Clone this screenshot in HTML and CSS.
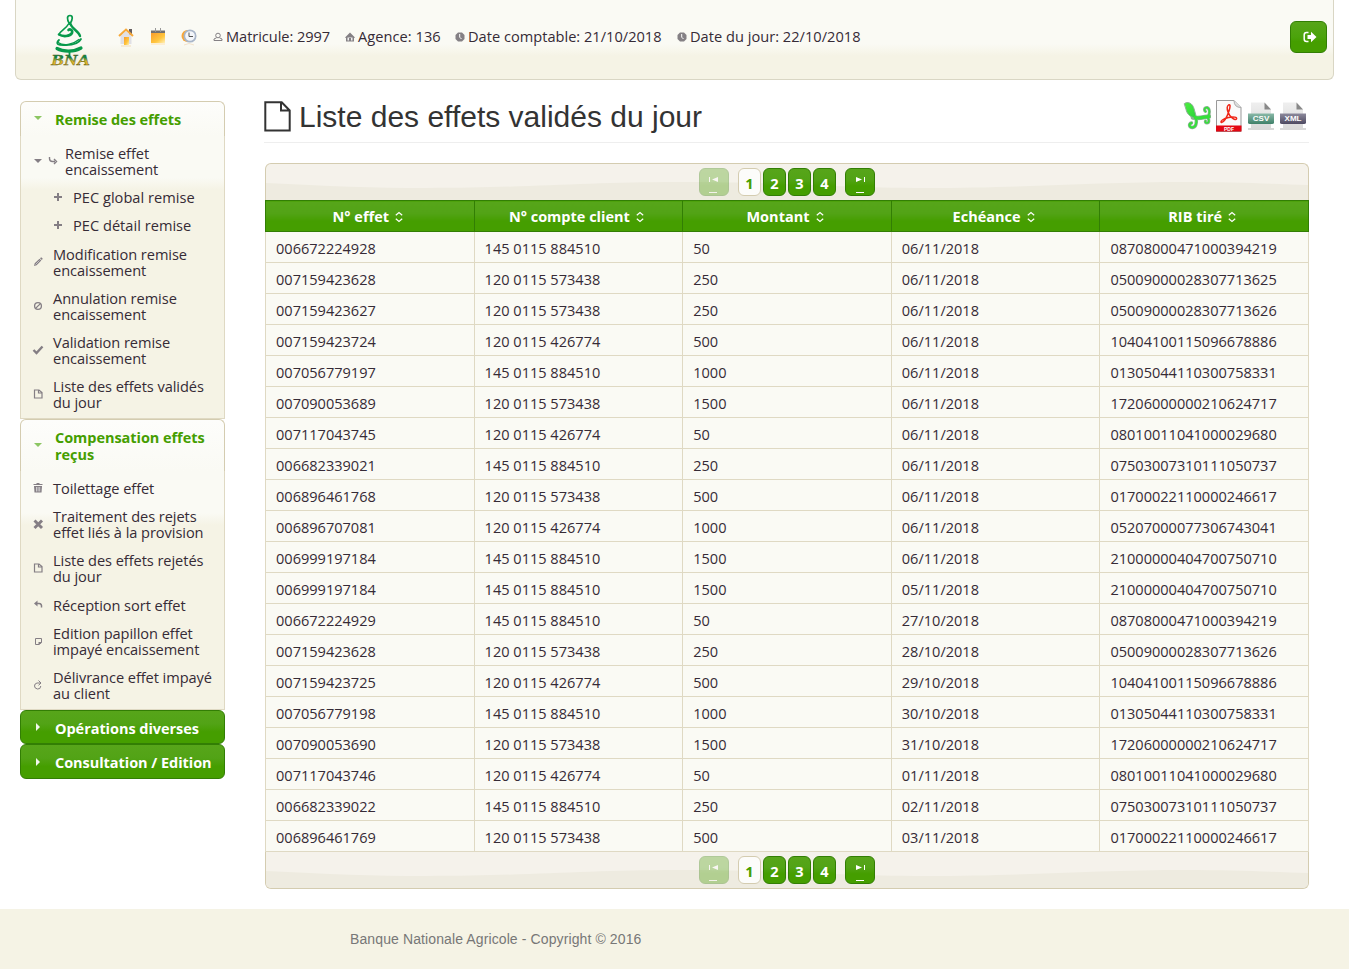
FILE: index.html
```html
<!DOCTYPE html>
<html lang="fr">
<head>
<meta charset="utf-8">
<title>Liste des effets validés du jour</title>
<link rel="stylesheet" href="styles.css">
</head>
<body>
<svg class="defs" width="0" height="0">
  <defs>
    <linearGradient id="orange" x1="0" y1="0" x2="1" y2="1"><stop offset="0" stop-color="#f79b2c"/><stop offset=".6" stop-color="#ffc53d"/><stop offset="1" stop-color="#fff0b8"/></linearGradient>
    <linearGradient id="gold" x1="0" y1="0" x2="0" y2="1"><stop offset=".3" stop-color="#0b8a43"/><stop offset=".55" stop-color="#d9b52c"/><stop offset="1" stop-color="#f2b01c"/></linearGradient>
    <linearGradient id="leaf" x1="0" y1="0" x2="1" y2="1"><stop offset="0" stop-color="#4df03f"/><stop offset="1" stop-color="#2ad13c"/></linearGradient>
    <linearGradient id="teal" x1="0" y1="0" x2="0" y2="1"><stop offset="0" stop-color="#8ab9a8"/><stop offset="1" stop-color="#3f8069"/></linearGradient>
    <linearGradient id="slate" x1="0" y1="0" x2="0" y2="1"><stop offset="0" stop-color="#8d8a9c"/><stop offset="1" stop-color="#4d4961"/></linearGradient>
    <linearGradient id="sheet" x1="0" y1="0" x2="0" y2="1"><stop offset="0" stop-color="#efefef"/><stop offset="1" stop-color="#d9d9d9"/></linearGradient>
  </defs>
  <symbol id="i-page" viewBox="0 0 16 16"><path d="M4.500 4h4.500l3 2.500V12H4.500zM8.500 4v3H12" fill="none" stroke="currentColor" stroke-width="1.200"/></symbol>
  <symbol id="i-sort" viewBox="0 0 10 12"><path d="M1.800 4.300 5 1.500l3.200 2.800M1.800 7.700 5 10.500l3.200-2.800" fill="none" stroke="currentColor" stroke-width="1.200"/></symbol>
  <symbol id="i-clock" viewBox="0 0 10 10"><path d="M3 .500h4L9.500 3v4L7 9.500H3L.500 7V3z" fill="#848084"/><path d="M4.700 2v3.200L6.500 7" fill="none" stroke="#fff"/></symbol>
  <symbol id="i-down" viewBox="0 0 16 16"><path d="M4 6h8L8 10z" fill="currentColor"/></symbol>
  <symbol id="i-right" viewBox="0 0 16 16"><path d="M6 4v8l4-4z" fill="currentColor"/></symbol>
  <symbol id="i-plus" viewBox="0 0 16 16"><path d="M7 4h2v3h3v2H9v3H7V9H4V7h3z" fill="currentColor"/></symbol>
</svg>

<header class="topbar">
  <svg class="logo" width="42" height="54" viewBox="0 0 42 54">
    <g fill="none" stroke="#07994b" stroke-linecap="round">
      <path d="M20.500 10c-3-5-2.500-8.500.5-8.500s3 3.500 0 8.500" stroke-width="1.700"/>
      <path d="M19.500 10C17 15 11 17 10 20.500" stroke-width="1.600"/>
      <path d="M21.500 10c1.500 5 8 7 9.500 12" stroke-width="2.400"/>
      <path d="M10 20.500c4 2.500 11 2 13-1.500 1-3-2-4.500-3.500-3" stroke-width="2.600"/>
      <path d="M10 26c-4 4-1 5.500 7 5 8 0 13-2 15-6" stroke-width="1.800"/>
      <path d="M9 28.500c6 4 15 2 21-3" stroke-width="1.500"/>
      <path d="M8 34.500c6 3.500 17 3.500 24-.5" stroke-width="3.200"/>
      <path d="M20.500 38v2.500" stroke-width="1.800"/>
    </g>
    <text class="logo-text" x="21.500" y="51" text-anchor="middle" textLength="39" lengthAdjust="spacingAndGlyphs">BNA</text>
  </svg>
  <nav class="quick">
    <svg width="16" height="20" viewBox="0 0 16 20"><path d="M11 1h3v6h-3z" fill="#665e5e"/><path d="M2.500 8 8 3l5.500 5v8h-11z" fill="#e0e0e5"/><path d="M1 8 8 1.500 15 8" fill="none" stroke="#f7a93a" stroke-width="2"/><path d="M6 9h5v8H6z" fill="url(#orange)"/><path d="M3 17h10v2H3z" fill="#f5ead6"/></svg>
    <svg width="16" height="20" viewBox="0 0 16 20"><path d="M1 5h14v10H1z" fill="url(#orange)"/><path d="M1 2.500h14v2.500H1z" fill="#73706f"/><path d="M5.500 0v4M10.500 0v4" stroke="#999"/><path d="M1 15h14v2H1z" fill="#fdeed2"/></svg>
    <svg width="16" height="20" viewBox="0 0 16 20"><circle cx="6.500" cy="8" r="6" fill="#f9a637"/><circle cx="9" cy="8" r="5.700" fill="#f4f6fa" stroke="#a9b6c9" stroke-width="1.700"/><path d="M8 4.500v4h4" fill="none" stroke="#555"/><path d="M3 17q5-3 10 0" fill="none" stroke="#f3e3cc"/></svg>
  </nav>
  <ul class="infos">
    <li><svg width="10" height="10" viewBox="0 0 10 10"><circle cx="5" cy="3.500" r="2.300" fill="none" stroke="#848084"/><path d="M3.500 5.800 1 7v1.500h8V7L6.500 5.800" fill="none" stroke="#848084"/></svg><span class="w104">Matricule: 2997</span></li>
    <li><svg width="10" height="10" viewBox="0 0 10 10"><path d="M0 5.500 5 .500l5 5-1 .5V9.500H1V6z" fill="#848084"/><path d="M2.500 5.500h5v3h-5z" fill="#eee"/><path d="M4 6h2v3H4z" fill="#848084"/></svg><span class="w83">Agence: 136</span></li>
    <li><svg width="10" height="10"><use href="#i-clock"/></svg><span class="w195">Date comptable: 21/10/2018</span></li>
    <li><svg width="10" height="10"><use href="#i-clock"/></svg><span class="w171">Date du jour: 22/10/2018</span></li>
  </ul>
  <button class="logout" aria-label="Quitter"><svg width="14" height="12" viewBox="0 0 14 12"><path d="M5.500 1.500h-2Q1.200 1.500 1.200 4v4q0 2.500 2.300 2.500h2" fill="none" stroke="#fff" stroke-width="1.500"/><path d="M4.500 4H8V.800L13.500 6 8 11.200V8H4.500z" fill="#fff"/></svg></button>
</header>

<div class="page">
  <aside class="side">
    <h3 class="acc open"><svg width="16" height="16"><use href="#i-down"/></svg><span>Remise des effets</span></h3>
    <ul class="panel">
      <li class="parent"><svg width="16" height="16"><use href="#i-down"/></svg><svg width="10" height="10" viewBox="0 0 10 10"><path d="M1.500 1v1.500q0 3 3 3H7M6 3l2.500 2.500L6 8" fill="none" stroke="currentColor" stroke-width="1.400"/></svg><span>Remise effet<br>encaissement</span></li>
      <li class="child"><svg width="16" height="16"><use href="#i-plus"/></svg><span>PEC global remise</span></li>
      <li class="child"><svg width="16" height="16"><use href="#i-plus"/></svg><span>PEC détail remise</span></li>
      <li><svg width="16" height="16" viewBox="0 0 16 16"><path d="m4 12 .7-2.700L9.500 4.700l1.800 1.800-4.700 4.800zM10 4.200l1.200-1 1.600 1.600-1 1.200z" fill="currentColor"/><path d="m5.500 10.500 4-4" stroke="#eee" stroke-width=".6"/></svg><span>Modification remise<br>encaissement</span></li>
      <li><svg width="16" height="16" viewBox="0 0 16 16"><circle cx="8" cy="8" r="3.400" fill="none" stroke="currentColor" stroke-width="1.300"/><path d="m5.600 10.400 4.800-4.800" stroke="currentColor" stroke-width="1.300"/></svg><span>Annulation remise<br>encaissement</span></li>
      <li><svg width="16" height="16" viewBox="0 0 16 16"><path d="m3.500 8 3 3 6-6.500" fill="none" stroke="currentColor" stroke-width="2.400"/></svg><span>Validation remise<br>encaissement</span></li>
      <li><svg width="16" height="16"><use href="#i-page"/></svg><span>Liste des effets validés<br>du jour</span></li>
    </ul>
    <h3 class="acc open"><svg width="16" height="16"><use href="#i-down"/></svg><span>Compensation effets<br>reçus</span></h3>
    <ul class="panel second">
      <li><svg width="16" height="16" viewBox="0 0 16 16"><path d="M3.500 4.500h9M6.500 3.500h3" stroke="currentColor"/><path d="M4 6h8l-.5 6.500h-7z" fill="currentColor"/><path d="M6.500 7v4.500M8.100 7v4.500M9.700 7v4.500" stroke="#eee" stroke-width=".7"/></svg><span>Toilettage effet</span></li>
      <li><svg width="16" height="16" viewBox="0 0 16 16"><path d="m4.500 4.500 7.500 7.500M12 4.500 4.500 12" stroke="currentColor" stroke-width="2.900"/></svg><span>Traitement des rejets<br>effet liés à la provision</span></li>
      <li><svg width="16" height="16"><use href="#i-page"/></svg><span>Liste des effets rejetés<br>du jour</span></li>
      <li><svg width="16" height="16" viewBox="0 0 16 16"><path d="m7.500 3.500-3.500 3 3.500 3z" fill="currentColor"/><path d="M6 6.500h3q3 0 2.500 4" fill="none" stroke="currentColor" stroke-width="1.500"/></svg><span>Réception sort effet</span></li>
      <li><svg width="16" height="16" viewBox="0 0 16 16"><path d="M5.500 5.500h6v4l-2.500 2H5.500z" fill="none" stroke="currentColor"/><path d="M8.500 9h3v1L9 11.500h-.500z" fill="currentColor"/></svg><span>Edition papillon effet<br>impayé encaissement</span></li>
      <li><svg width="16" height="16" viewBox="0 0 16 16"><path d="M10.500 6H7q-2.500.5-2.500 3t3 3T10.800 9M8.500 3.500 11 6 8.500 8.300" fill="none" stroke="currentColor"/></svg><span>Délivrance effet impayé<br>au client</span></li>
    </ul>
    <h3 class="acc"><svg width="16" height="16"><use href="#i-right"/></svg><span>Opérations diverses</span></h3>
    <h3 class="acc last"><svg width="16" height="16"><use href="#i-right"/></svg><span>Consultation / Edition</span></h3>
  </aside>

  <main class="main">
    <div class="title">
      <svg width="28" height="31" viewBox="0 0 28 31"><path d="M2.200 1.200h15.500l8 8.300v20H1.300V1.200zM17 1.200V9.500h8.500" fill="none" stroke="#333" stroke-width="2"/></svg>
      <h1>Liste des effets validés du jour</h1>
      <div class="exports">
        <svg width="28" height="32" viewBox="0 0 28 32"><g fill="none" stroke-linecap="round"><g stroke="#8fb096"><path d="M10 17.500c6 1.500 13-1 16-1" stroke-width="4.600"/><path d="M25 16.500c2-3 2-8-1-9-3 0-3 3-1.500 4" stroke-width="3"/><path d="M13 18c1 5 0 9-3.500 9.500-3.500 0-4-4-1-4.500" stroke-width="3.400"/><path d="M24 17c3 3 2 6 0 6-1.500 0-2-1-1.500-2" stroke-width="3"/></g><path d="M1.500 3.500c3-2.500 8-.5 9.500 5l2.500 9c-5 1-9.500-3-10.500-8z" fill="url(#leaf)" stroke="#8fb096"/><g stroke="#35e03a"><path d="M12 17.500c5 1.500 11-1 14-1" stroke-width="3"/><path d="M25 16.500c2-3 2-8-1-9-3 0-3 3-1.500 4" stroke-width="1.600"/><path d="M13 18c1 5 0 9-3.500 9.500-3.500 0-4-4-1-4.500" stroke-width="2"/><path d="M24 17c3 3 2 6 0 6-1.500 0-2-1-1.500-2" stroke-width="1.600"/></g></g></svg>
        <svg width="28" height="32" viewBox="0 0 28 32"><path d="M1.500.500H19l7 7v24H1.500z" fill="#fafafa" stroke="#999"/><path d="M19 .500q0 7 7 7" fill="#ddd" stroke="#aaa"/><path d="M13.500 5c2-1 2 1 .5 6-2 6-5 11-7.500 11.500-2-1 2-4 7-5s9-.5 8 1.500-7-2-8.500-7c-1-3-1-6 .5-7z" fill="none" stroke="#ef2618" stroke-width="1.500"/><path d="M1 25.500h25.500V31.500H1z" fill="#e30613"/><text class="pdf" x="14" y="30.500" text-anchor="middle">PDF</text></svg>
        <svg width="28" height="32" viewBox="0 0 28 32"><path d="M1 29h26" stroke="#ccc" stroke-width="1.500"/><path d="M4 2.500h14l6 7V29H4z" fill="url(#sheet)"/><path d="M17.500 2.500l6.500 7h-6.500z" fill="#888"/><path d="M1 13.500h26v9q0 1.500-2 1.500H3q-2 0-2-1.500z" fill="url(#teal)"/><text class="tag" x="14" y="21" text-anchor="middle">CSV</text></svg>
        <svg width="28" height="32" viewBox="0 0 28 32"><path d="M1 29h26" stroke="#ccc" stroke-width="1.500"/><path d="M4 2.500h14l6 7V29H4z" fill="url(#sheet)"/><path d="M17.500 2.500l6.500 7h-6.500z" fill="#888"/><path d="M1 13.500h26v9q0 1.500-2 1.500H3q-2 0-2-1.500z" fill="url(#slate)"/><text class="tag" x="14" y="21" text-anchor="middle">XML</text></svg>
      </div>
    </div>

    <div class="pager top">
      <svg class="wave" width="1042" height="36" viewBox="0 0 1042 36"><path d="M0 19C60 22 110 24 160 24 260 24 320 18 410 18 520 18 570 24 660 24 760 24 830 18 920 18 970 18 1010 20 1042 21V36H0z" fill="#eeebe0"/></svg>
      <a class="pg nav off"><svg width="10" height="18" viewBox="0 0 10 18"><path d="M0 1h1v5H0zM9 1v5L3 3.500zM0 16h8v1H0z" fill="#fff"/></svg></a>
      <span class="pages"><a class="pg cur">1</a><a class="pg">2</a><a class="pg">3</a><a class="pg">4</a></span>
      <a class="pg nav"><svg width="10" height="18" viewBox="0 0 10 18"><path d="M9 1h1v5H9zM1 1v5l6-2.500zM1 16h8v1H1z" fill="#fff"/></svg></a>
    </div>
    <table class="grid">
      <thead><tr>
        <th>N° effet<svg width="10" height="12"><use href="#i-sort"/></svg></th>
        <th>N° compte client<svg width="10" height="12"><use href="#i-sort"/></svg></th>
        <th>Montant<svg width="10" height="12"><use href="#i-sort"/></svg></th>
        <th>Echéance<svg width="10" height="12"><use href="#i-sort"/></svg></th>
        <th>RIB tiré<svg width="10" height="12"><use href="#i-sort"/></svg></th>
      </tr></thead>
      <tbody>
        <tr><td>006672224928</td><td>145 0115 884510</td><td>50</td><td>06/11/2018</td><td>08708000471000394219</td></tr>
        <tr><td>007159423628</td><td>120 0115 573438</td><td>250</td><td>06/11/2018</td><td>05009000028307713625</td></tr>
        <tr><td>007159423627</td><td>120 0115 573438</td><td>250</td><td>06/11/2018</td><td>05009000028307713626</td></tr>
        <tr><td>007159423724</td><td>120 0115 426774</td><td>500</td><td>06/11/2018</td><td>10404100115096678886</td></tr>
        <tr><td>007056779197</td><td>145 0115 884510</td><td>1000</td><td>06/11/2018</td><td>01305044110300758331</td></tr>
        <tr><td>007090053689</td><td>120 0115 573438</td><td>1500</td><td>06/11/2018</td><td>17206000000210624717</td></tr>
        <tr><td>007117043745</td><td>120 0115 426774</td><td>50</td><td>06/11/2018</td><td>08010011041000029680</td></tr>
        <tr><td>006682339021</td><td>145 0115 884510</td><td>250</td><td>06/11/2018</td><td>07503007310111050737</td></tr>
        <tr><td>006896461768</td><td>120 0115 573438</td><td>500</td><td>06/11/2018</td><td>01700022110000246617</td></tr>
        <tr><td>006896707081</td><td>120 0115 426774</td><td>1000</td><td>06/11/2018</td><td>05207000077306743041</td></tr>
        <tr><td>006999197184</td><td>145 0115 884510</td><td>1500</td><td>06/11/2018</td><td>21000000404700750710</td></tr>
        <tr><td>006999197184</td><td>145 0115 884510</td><td>1500</td><td>05/11/2018</td><td>21000000404700750710</td></tr>
        <tr><td>006672224929</td><td>145 0115 884510</td><td>50</td><td>27/10/2018</td><td>08708000471000394219</td></tr>
        <tr><td>007159423628</td><td>120 0115 573438</td><td>250</td><td>28/10/2018</td><td>05009000028307713626</td></tr>
        <tr><td>007159423725</td><td>120 0115 426774</td><td>500</td><td>29/10/2018</td><td>10404100115096678886</td></tr>
        <tr><td>007056779198</td><td>145 0115 884510</td><td>1000</td><td>30/10/2018</td><td>01305044110300758331</td></tr>
        <tr><td>007090053690</td><td>120 0115 573438</td><td>1500</td><td>31/10/2018</td><td>17206000000210624717</td></tr>
        <tr><td>007117043746</td><td>120 0115 426774</td><td>50</td><td>01/11/2018</td><td>08010011041000029680</td></tr>
        <tr><td>006682339022</td><td>145 0115 884510</td><td>250</td><td>02/11/2018</td><td>07503007310111050737</td></tr>
        <tr><td>006896461769</td><td>120 0115 573438</td><td>500</td><td>03/11/2018</td><td>01700022110000246617</td></tr>
      </tbody>
    </table>
    <div class="pager bottom">
      <svg class="wave" width="1042" height="36" viewBox="0 0 1042 36"><path d="M0 19C60 22 110 24 160 24 260 24 320 18 410 18 520 18 570 24 660 24 760 24 830 18 920 18 970 18 1010 20 1042 21V36H0z" fill="#eeebe0"/></svg>
      <a class="pg nav off"><svg width="10" height="18" viewBox="0 0 10 18"><path d="M0 1h1v5H0zM9 1v5L3 3.500zM0 16h8v1H0z" fill="#fff"/></svg></a>
      <span class="pages"><a class="pg cur">1</a><a class="pg">2</a><a class="pg">3</a><a class="pg">4</a></span>
      <a class="pg nav"><svg width="10" height="18" viewBox="0 0 10 18"><path d="M9 1h1v5H9zM1 1v5l6-2.500zM1 16h8v1H1z" fill="#fff"/></svg></a>
    </div>
  </main>
</div>
<footer class="foot">Banque Nationale Agricole - Copyright © 2016</footer>
</body>
</html>
```
FILE: styles.css
```css
* { box-sizing: border-box; }
body { margin: 0; height: 969px; overflow: hidden; background: #fff; color: #362b36; font: 14.6px "Open Sans", "Noto Sans", sans-serif; }
ul { list-style: none; margin: 0; padding: 0; }
svg { display: block; flex: none; }
.defs { position: absolute; }

.topbar { height: 80px; margin: 0 15px; padding: 0 6px 0 33px; display: flex; align-items: flex-start; border: 1px solid #d9d6c4; border-top: 0; border-radius: 0 0 6px 6px; background: linear-gradient(#fafaf4 0 44px, #f5f3e5 56px); }
.logo { margin-top: 14px; }
.logo-text { font: italic bold 14px "Liberation Serif", serif; fill: url(#gold); stroke: #4d5520; stroke-width: .3; }
.quick { display: flex; gap: 15.500px; margin: 28px 0 0 27px; }
.infos { display: flex; margin: 26px 0 0 16px; height: 20px; }
.infos li { display: flex; align-items: center; gap: 3px; line-height: 20px; margin-right: 14px; white-space: nowrap; }
.infos svg { margin-top: 1px; }
.w104 { width: 105px; letter-spacing: -.05px; }
.w83 { width: 83px; letter-spacing: .05px; }
.w195 { width: 195px; letter-spacing: .01px; }
.w171 { width: 172px; letter-spacing: .02px; }
.logout { margin: 21px 0 0 auto; width: 37px; height: 32px; padding: 0 0 0 2px; display: flex; align-items: center; justify-content: center; border: 1px solid #327e04; border-radius: 6px; background: linear-gradient(#57a51a, #4ba30b 50%, #459e00 65%); }

.page { display: flex; height: 829px; padding: 21px 40px 0 20px; }
.side { width: 205px; margin-right: 40px; flex: none; }
.acc { margin: 0; height: 34px; display: flex; align-items: center; padding: 2px 0 0 9px; gap: 9px; border: 1px solid #327e04; border-radius: 6px; background: linear-gradient(#57a51a, #52a316 40%, #459e00 65%); color: #fff; font-size: 14.5px; font-weight: 700; line-height: 17px; white-space: nowrap; letter-spacing: -.05px; }
.acc svg { color: #f2f7ee; margin-top: -2px; }
.acc.last { height: 35px; }
.acc.open { height: auto; padding-bottom: 8px; padding-top: 9px; color: #459e00; background: linear-gradient(#fdfdfb, #fafaf4); border-color: #d4ccb0; border-bottom: 0; border-radius: 6px 6px 0 0; }
.acc.open svg { color: #8cc663; margin-top: -3px; }
.panel { height: 283px; padding: 3px 0 0 9px; border: 1px solid #dfd9c3; border-top: 0; background: linear-gradient(#fafaf4 0 42px, #f5f3e5 54px); }
.panel.second { height: 239px; padding-top: 3px; }
.panel li { display: flex; align-items: center; gap: 7px; padding: 6.100px 0; line-height: 16px; white-space: nowrap; letter-spacing: -.06px; }
.panel svg { color: #847e84; }
.panel .parent { gap: 2px; }
.panel .parent span { margin-left: 5px; }
.panel .child { padding-left: 20px; letter-spacing: .02px; }

.main { flex: 1; min-width: 0; }
.title { display: flex; align-items: flex-start; height: 42px; border-bottom: 1px solid #eee; margin: 0 0 20px -1px; }
h1 { margin: -2px 0 0 7px; font: 400 30px/36px "Liberation Sans", Arial, sans-serif; color: #333; white-space: nowrap; }
.exports { display: flex; gap: 4px; margin: -1px 2px 0 auto; }
.pdf { font: bold 5px "Liberation Sans", sans-serif; fill: #fff; }
.tag { font: bold 8px "Liberation Sans", sans-serif; fill: #fff; }

.pager { position: relative; display: flex; justify-content: center; align-items: flex-start; height: 37px; padding-top: 4px; border: 1px solid #d4ccb0; background: #f5f2eb; overflow: hidden; }
.pager.top { border-bottom: 0; border-radius: 6px 6px 0 0; }
.pager.bottom { border-top: 0; border-radius: 0 0 6px 6px; }
.wave { position: absolute; left: 0; top: 0; }
.pages { display: flex; gap: 2px; margin: 0 9px; }
.pg { position: relative; width: 23px; height: 28px; border: 1px solid #327e04; border-radius: 6px; background: linear-gradient(#57a51a, #52a316 40%, #459e00 65%); color: #fff; font-weight: 700; line-height: 29px; text-align: center; }
.pg.cur { background: #fcfcfa; color: #459e00; border-color: #d4ccb0; }
.pg.nav { width: 30px; display: flex; justify-content: center; padding-top: 7px; }
.pg.off { opacity: .35; }

.grid { width: 1044px; border-collapse: collapse; table-layout: fixed; }
.grid th { height: 31px; padding: 2px 3px 0 0; border: 1px solid #327e04; background: linear-gradient(#57a51a, #52a316 40%, #459e00 65%); color: #fff; font-size: 14.5px; line-height: 20px; }
.grid th svg { display: inline-block; vertical-align: -1px; margin-left: 5px; }
.grid td { height: 31px; padding: 2px 10px 0; border: 1px solid #dfd9c3; background: #fafaf4; font-size: 14.550px; line-height: 20px; white-space: nowrap; }

.foot { height: 60px; padding-left: 350px; background: #f5f3e5; color: #777; font: 14px/60px "Liberation Sans", Arial, sans-serif; letter-spacing: .11px; }
```
